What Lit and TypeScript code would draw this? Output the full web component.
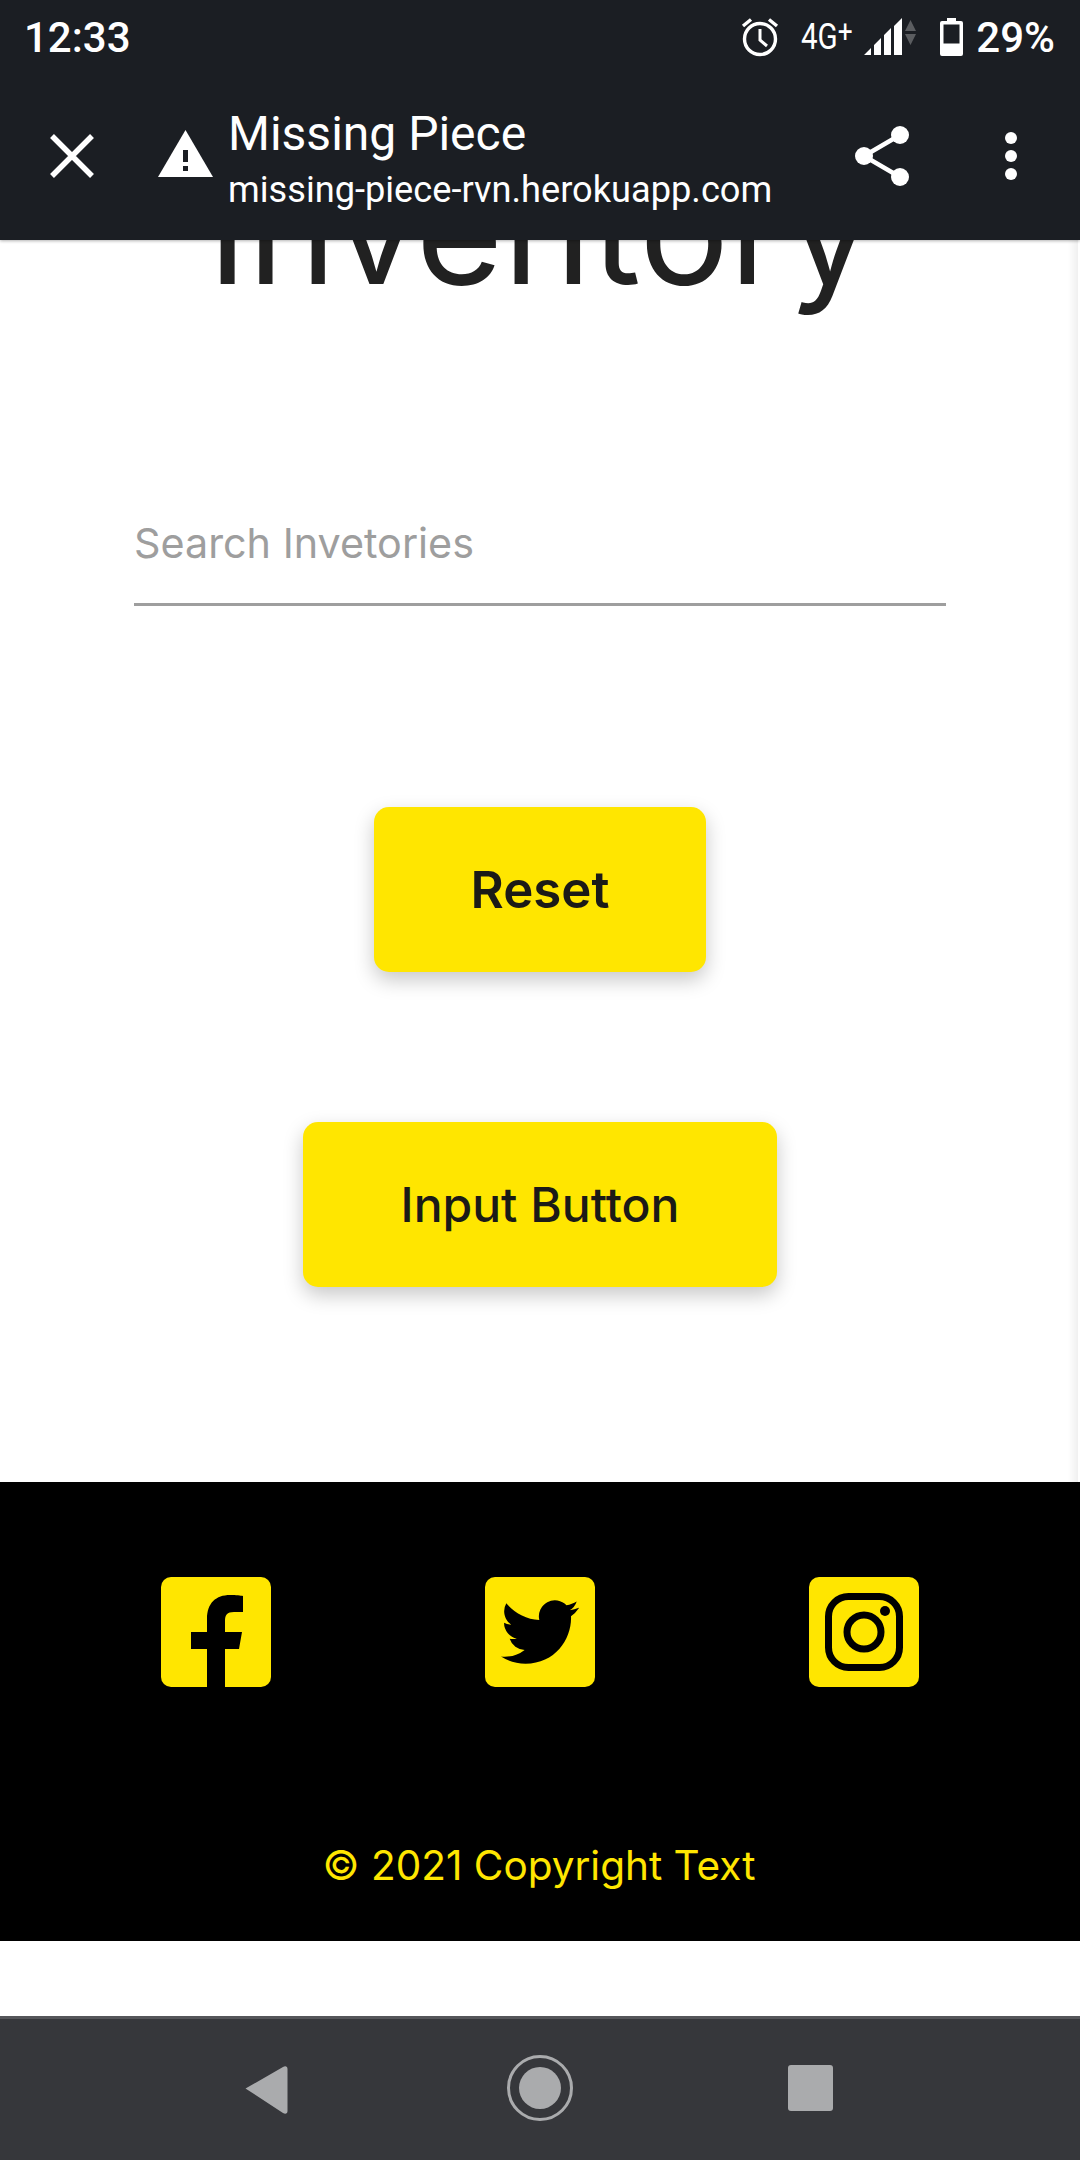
import { LitElement, html, css } from 'lit';
import { customElement } from 'lit/decorators.js';

@customElement('app-root')
export class AppRoot extends LitElement {
  static styles = css`
    :host {
      display: block;
      width: 1080px;
      height: 2160px;
      background: #fff;
      font-family: Inter, "Liberation Sans", sans-serif;
      overflow: hidden;
    }
    .page {
      display: flex;
      flex-direction: column;
      height: 2160px;
    }
    svg {
      display: block;
      flex: none;
    }

    /* android + custom tab chrome */
    .chrome {
      position: relative;
      z-index: 2;
      height: 240px;
      background: #1b1e23;
      color: #fff;
      font-family: Roboto, sans-serif;
      box-shadow: 0 1px 3px rgba(0, 0, 0, 0.3);
    }
    .status {
      display: flex;
      align-items: center;
      height: 74px;
      padding: 0 25px 0 24px;
      font-size: 42px;
      font-weight: 500;
    }
    .time {
      flex: 1;
    }
    .status-icons {
      display: flex;
      align-items: center;
    }
    .net {
      display: flex;
      align-items: flex-start;
      font-size: 36px;
      line-height: 40px;
      font-weight: 400;
      transform: scaleX(0.82);
      transform-origin: left center;
      width: 60px;
      margin-left: 22px;
    }
    .plus {
      font-size: 32px;
      line-height: 28px;
    }
    .sig {
      margin-left: 3px;
    }
    .batt {
      margin-left: 24px;
    }
    .pct {
      margin-left: 13px;
    }
    .toolbar {
      display: flex;
      align-items: center;
      height: 164px;
    }
    .close {
      margin-left: 48px;
    }
    .warn {
      margin-left: 62px;
      margin-bottom: 6px;
    }
    .titles {
      flex: 1;
      margin-left: 15px;
      margin-top: 7px;
    }
    .title {
      font-size: 48px;
      line-height: 60px;
    }
    .url {
      font-size: 36.2px;
      line-height: 52px;
    }
    .share {
      margin-right: 96px;
    }
    .more {
      margin-right: 63px;
    }

    /* page content */
    main {
      position: relative;
      height: 1242px;
      overflow: hidden;
      display: flex;
      flex-direction: column;
      align-items: center;
    }
    main::after {
      content: "";
      position: absolute;
      top: 0;
      bottom: 0;
      right: 2px;
      width: 10px;
      background: linear-gradient(to right, rgba(0, 0, 0, 0), rgba(0, 0, 0, 0.06));
    }
    h1 {
      margin: -90px 0 0;
      font-size: 150px;
      line-height: 160px;
      font-weight: 400;
      color: #212121;
      white-space: nowrap;
    }
    .search {
      width: 812px;
      height: 84px;
      margin-top: 209px;
      border-bottom: 3px solid #9e9e9e;
      font-size: 41.3px;
      line-height: 48px;
      color: #9e9e9e;
    }
    .btn {
      display: flex;
      align-items: center;
      justify-content: center;
      height: 165px;
      border-radius: 15px;
      background: #ffe600;
      color: #1b1a17;
      font-size: 48px;
      font-weight: 500;
      box-shadow: 0 8px 20px rgba(0, 0, 0, 0.22);
    }
    .reset {
      width: 332px;
      margin-top: 201px;
      font-size: 51px;
      font-weight: 600;
    }
    .input {
      width: 474px;
      margin-top: 150px;
    }

    footer {
      height: 459px;
      background: #000;
      color: #ffe600;
      display: flex;
      flex-direction: column;
      align-items: center;
    }
    .social {
      display: grid;
      grid-template-columns: repeat(3, 324px);
      justify-items: center;
      margin-top: 95px;
    }
    .copy {
      margin-top: 155px;
      margin-right: 2px;
      font-size: 40.5px;
      line-height: 48px;
    }

    .gap {
      flex: 1;
    }
    nav {
      height: 141px;
      background: #36373b;
      border-top: 3px solid #55565a;
    }
  `;

  render() {
    return html`
      <div class="page">
        <header class="chrome">
          <div class="status">
            <span class="time">12:33</span>
            <div class="status-icons">
              <svg width="38" height="40" viewBox="0 0 38 40" fill="none" stroke="#fff">
                <circle cx="19" cy="22" r="15.5" stroke-width="3.4" />
                <path d="M19 12v11l7 6" stroke-width="3" />
                <path d="M2 9l8-6.5M36 9l-8-6.5" stroke-width="3.4" />
              </svg>
              <span class="net">4G<span class="plus">+</span></span>
              <svg class="sig" width="52" height="38" viewBox="0 0 52 38">
                <path fill="#fff" d="M0 37l7-7v7zM10 27l7-7v17h-7zM20 17l7-7v27h-7zM30 8l8-8v37h-8z" />
                <path fill="#5b5d60" d="M41 13l5.5-11L52 13zM41 16h11l-5.500 11z" />
              </svg>
              <svg class="batt" width="23" height="38" viewBox="0 0 23 38">
                <path fill="#fff" d="M7 0h9v3h5a2 2 0 0 1 2 2v31a2 2 0 0 1-2 2H2a2 2 0 0 1-2-2V5a2 2 0 0 1 2-2h5z" />
                <rect x="3.500" y="6.500" width="16" height="19" fill="#1b1e23" />
              </svg>
              <span class="pct">29%</span>
            </div>
          </div>
          <div class="toolbar">
            <svg class="close" width="48" height="48" viewBox="0 0 48 48" stroke="#fff" stroke-width="5.500">
              <path d="M4 4l40 40M44 4L4 44" />
            </svg>
            <svg class="warn" width="55" height="47" viewBox="0 0 55 47">
              <path fill="#fff" d="M27.500 0L55 47H0z" />
              <path fill="#1b1e23" d="M25 20h5v12h-5zM25 36h5v5h-5z" />
            </svg>
            <div class="titles">
              <div class="title">Missing Piece</div>
              <div class="url">missing-piece-rvn.herokuapp.com</div>
            </div>
            <svg class="share" width="54" height="60" viewBox="0 0 54 60" fill="#fff">
              <circle cx="45" cy="9" r="9" />
              <circle cx="9" cy="30" r="9" />
              <circle cx="45" cy="51" r="9" />
              <path d="M45 9L9 30l36 21" fill="none" stroke="#fff" stroke-width="4.500" />
            </svg>
            <svg class="more" width="12" height="48" viewBox="0 0 12 48" fill="#fff">
              <circle cx="6" cy="6" r="6" />
              <circle cx="6" cy="24" r="6" />
              <circle cx="6" cy="42" r="6" />
            </svg>
          </div>
        </header>

        <main>
          <h1>Inventory</h1>
          <div class="search">Search Invetories</div>
          <div class="btn reset">Reset</div>
          <div class="btn input">Input Button</div>
        </main>

        <footer>
          <div class="social">
            <svg width="110" height="110" viewBox="0 0 110 110">
              <rect width="110" height="110" rx="10" fill="#ffe600" />
              <path d="M46 110V72H30V55h16V42c0-16 9-24 23-24 6 0 11 .5 13 1v16h-9c-7 0-9 3-9 9v11h17l-3 17H64v38z" />
            </svg>
            <svg width="110" height="110" viewBox="0 0 110 110">
              <rect width="110" height="110" rx="10" fill="#ffe600" />
              <path
                transform="translate(16 16) scale(3.250)"
                d="M23.953 4.570a10 10 0 01-2.825.775 4.958 4.958 0 002.163-2.723c-.951.555-2.005.959-3.127 1.184a4.920 4.920 0 00-8.384 4.482C7.690 8.095 4.067 6.130 1.640 3.162a4.822 4.822 0 00-.666 2.475c0 1.710.870 3.213 2.188 4.096a4.904 4.904 0 01-2.228-.616v.060a4.923 4.923 0 003.946 4.827 4.996 4.996 0 01-2.212.085 4.936 4.936 0 004.604 3.417 9.867 9.867 0 01-6.102 2.105c-.390 0-.779-.023-1.170-.067a13.995 13.995 0 007.557 2.209c9.053 0 13.998-7.496 13.998-13.985 0-.210 0-.420-.015-.630A9.935 9.935 0 0024 4.590z"
              />
            </svg>
            <svg width="110" height="110" viewBox="0 0 110 110">
              <rect width="110" height="110" rx="10" fill="#ffe600" />
              <rect x="19.500" y="19.500" width="71" height="71" rx="20" fill="none" stroke="#000" stroke-width="7" />
              <circle cx="55" cy="55" r="17" fill="none" stroke="#000" stroke-width="7" />
              <circle cx="76" cy="34" r="5" />
            </svg>
          </div>
          <div class="copy">© 2021 Copyright Text</div>
        </footer>

        <div class="gap"></div>

        <nav>
          <svg width="1080" height="141" viewBox="0 0 1080 141" fill="#aaabad">
            <path d="M245.500 69.500L283 48c2.500-1.500 4.500-.5 4.500 2v42c0 2.500-2 3.500-4.500 2z" />
            <circle cx="540" cy="69" r="31.500" fill="none" stroke="#aaabad" stroke-width="3" />
            <circle cx="540" cy="69" r="21" />
            <rect x="788" y="46" width="45" height="46" rx="3" />
          </svg>
        </nav>
      </div>
    `;
  }
}
